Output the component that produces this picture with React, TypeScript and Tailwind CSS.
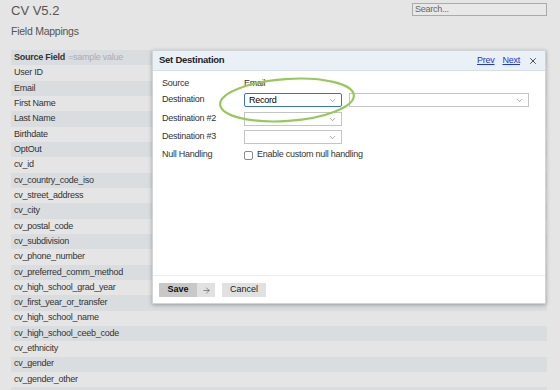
import { ChevronDown, X, ArrowRight } from 'lucide-react';

const fields = [
  'User ID',
  'Email',
  'First Name',
  'Last Name',
  'Birthdate',
  'OptOut',
  'cv_id',
  'cv_country_code_iso',
  'cv_street_address',
  'cv_city',
  'cv_postal_code',
  'cv_subdivision',
  'cv_phone_number',
  'cv_preferred_comm_method',
  'cv_high_school_grad_year',
  'cv_first_year_or_transfer',
  'cv_high_school_name',
  'cv_high_school_ceeb_code',
  'cv_ethnicity',
  'cv_gender',
  'cv_gender_other',
  '',
];

function Select({ value, width, focused }: { value?: string; width: string; focused?: boolean }) {
  return (
    <div
      className={`${width} h-[14px] flex items-center justify-between bg-white pl-[4px] pr-[4px] ${
        focused ? 'border border-[#3b6fd6] rounded-[2px]' : 'border border-[#c4c4c4]'
      }`}
    >
      <span className="text-[9px] leading-none text-black">{value}</span>
      <ChevronDown size={9} strokeWidth={1.5} className="text-[#666]" />
    </div>
  );
}

export default function App() {
  return (
    <div
      className="relative w-[560px] h-[390px] overflow-hidden bg-[#e5e5e5] text-[#333] tracking-[-0.25px]"
      style={{ fontFamily: '"Liberation Sans", Arial, sans-serif' }}
    >
      {/* Page header */}
      <div className="flex justify-between items-start h-[50px]">
        <div className="pl-[11px] pt-[4px]">
          <div className="text-[13px] leading-[14px] text-[#555] tracking-normal">CV V5.2</div>
          <div className="mt-[7px] text-[10.5px] leading-[12px] text-[#555]">Field Mappings</div>
        </div>
        <div className="mt-[3px] mr-[13px] w-[135px] h-[13px] border border-[#aaa] bg-[#e8e8e8] flex items-center px-[2px]">
          <span className="text-[9px] leading-none text-[#666]">Search...</span>
        </div>
      </div>

      {/* Field list */}
      <div className="ml-[11px] w-[536px]">
        <div className="h-[15.33px] flex items-center px-[3px] bg-[#d9dde0] text-[9px]">
          <span className="font-bold text-[#333]">Source Field</span>
          <span className="ml-[3px] text-[#aab]">=sample value</span>
        </div>
        {fields.map((f, i) => (
          <div
            key={i}
            className={`h-[15.33px] flex items-center px-[3px] text-[9px] text-[#333] ${
              i % 2 === 1 ? 'bg-[#d9dde0]' : 'bg-[#e5e5e5]'
            }`}
          >
            {f}
          </div>
        ))}
      </div>

      {/* Modal */}
      <div className="absolute left-[152px] top-[50px] w-[394px] h-[254px] bg-white border border-[#cfd4d8] shadow-[0_1px_4px_rgba(0,0,0,0.3)] flex flex-col">
        <div className="h-[20px] flex items-center justify-between bg-[#e9f1f7] border-b border-[#d6dee6] pl-[6px] pr-[7px]">
          <span className="font-bold text-[9.5px] text-[#222]">Set Destination</span>
          <div className="flex items-center gap-[8px] text-[9px]">
            <span className="text-[#2436d6] underline">Prev</span>
            <span className="text-[#2436d6] underline">Next</span>
            <X size={10} strokeWidth={2} className="text-[#333]" />
          </div>
        </div>

        <div className="flex-1 pl-[9px] pt-[6px] text-[9px] text-[#333]">
          <div className="flex items-center h-[14px]">
            <span className="w-[82px]">Source</span>
            <span>Email</span>
          </div>
          <div className="flex items-center h-[14px] mt-[2px]">
            <span className="w-[82px]">Destination</span>
            <Select value="Record" width="w-[98px]" focused />
            <div className="ml-[7px]">
              <Select width="w-[180px]" />
            </div>
          </div>
          <div className="flex items-center h-[14px] mt-[5px]">
            <span className="w-[82px]">Destination #2</span>
            <Select width="w-[98px]" />
          </div>
          <div className="flex items-center h-[14px] mt-[4px]">
            <span className="w-[82px]">Destination #3</span>
            <Select width="w-[98px]" />
          </div>
          <div className="flex items-center h-[14px] mt-[4px]">
            <span className="w-[82px]">Null Handling</span>
            <span className="w-[9px] h-[9px] border border-[#888] rounded-[2px] bg-white" />
            <span className="ml-[4px]">Enable custom null handling</span>
          </div>
        </div>

        <div className="h-[28px] border-t border-[#ececec] flex items-start pt-[7px] pl-[6px] tracking-normal">
          <div className="flex h-[14px]">
            <span className="w-[38px] bg-[#c8c8c8] flex items-center justify-center text-[9px] font-bold text-[#111]">Save</span>
            <span className="w-[18px] bg-[#e1e1e1] flex items-center justify-center">
              <ArrowRight size={9} strokeWidth={1.5} className="text-[#444]" />
            </span>
          </div>
          <span className="ml-[7px] w-[44px] h-[14px] bg-[#e1e1e1] flex items-center justify-center text-[9px] text-[#222]">Cancel</span>
        </div>
      </div>

      {/* Annotation ellipse */}
      <svg className="absolute left-0 top-0 pointer-events-none" width="560" height="390">
        <ellipse cx="287" cy="100" rx="67" ry="21" fill="none" stroke="#96c85a" strokeWidth="2.2" transform="rotate(-4 287 100)" />
      </svg>
    </div>
  );
}
